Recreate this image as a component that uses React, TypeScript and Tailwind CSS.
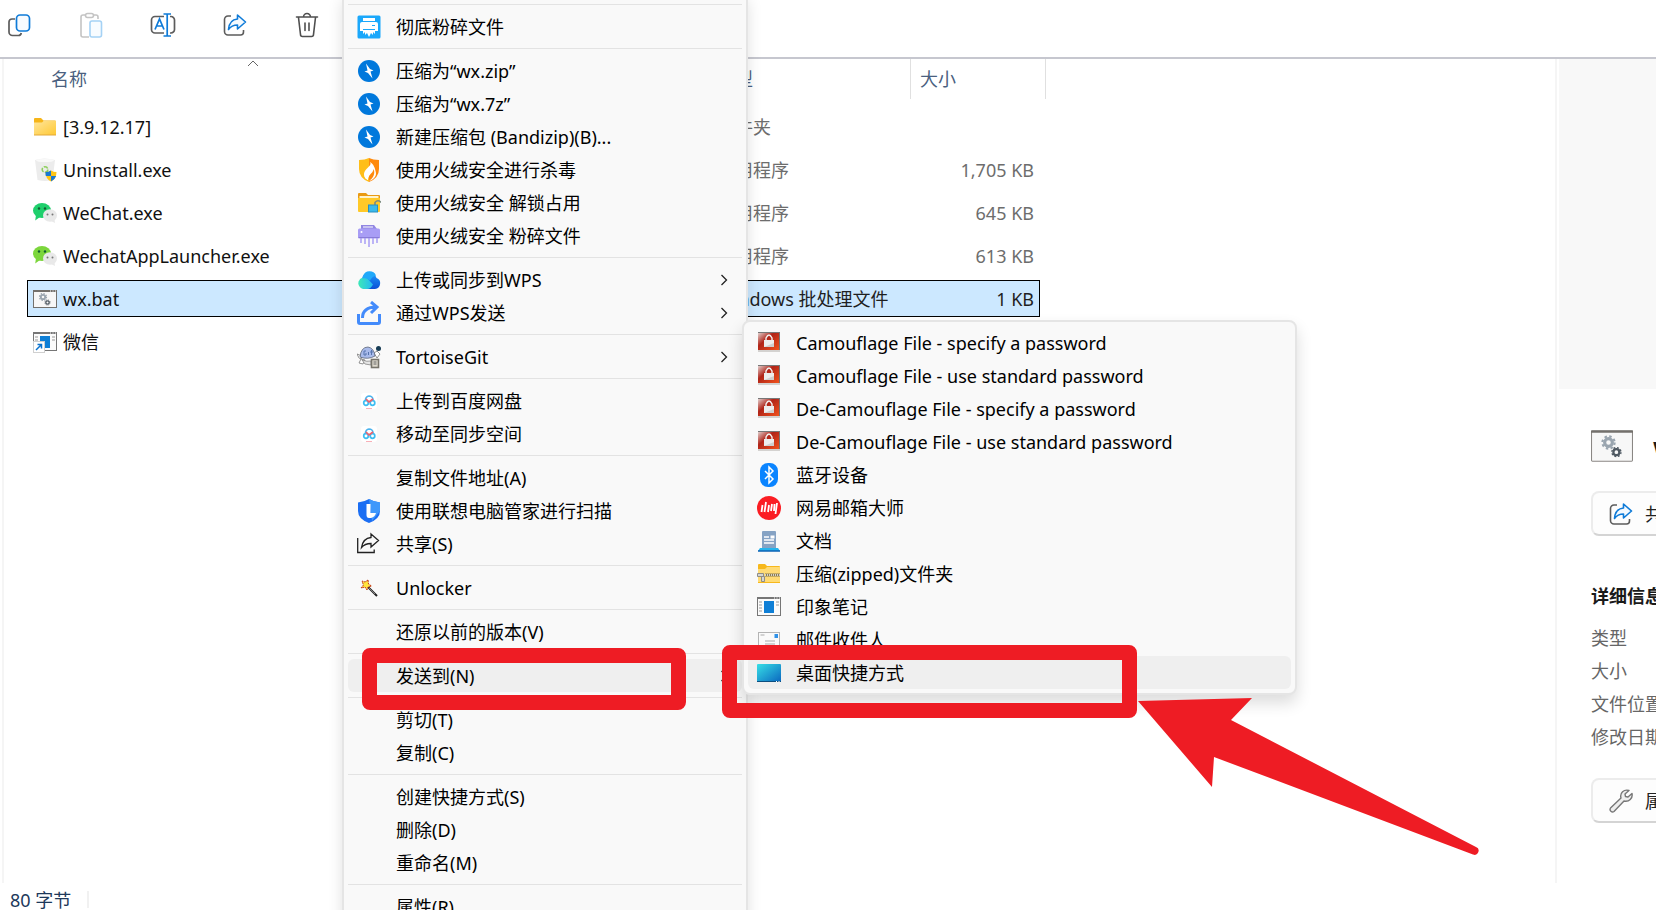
import type { ReactNode } from "react"
import { useState } from "react"

const font = "font-['Noto_Sans','Noto_Sans_CJK_SC',sans-serif]"


// ---------- toolbar icons ----------

function CopyIcon() {
  return (
    <svg width="24" height="24" viewBox="0 0 24 24" fill="none" strokeWidth="1.7">
      <path d="M8 6H5a3 3 0 0 0-3 3v10a3.500 3.500 0 0 0 3.500 3.500h6A3 3 0 0 0 14.300 20" stroke="#5c5c5c" />
      <rect x="9.500" y="2" width="13" height="16" rx="3.500" fill="#f7fbff" stroke="#0f7bd8" />
    </svg>
  )
}

function PasteIcon() {
  return (
    <svg width="24" height="26" viewBox="0 0 24 26" fill="none" strokeWidth="1.6">
      <path d="M10 25H4a2 2 0 0 1-2-2V5a2 2 0 0 1 2-2h3M14 3h3a2 2 0 0 1 2 2v2" stroke="#c4c4c4" />
      <rect x="6.500" y="1.500" width="8" height="4" rx="2" stroke="#c4c4c4" />
      <rect x="11" y="9" width="11.500" height="16" rx="2" fill="#f8fcff" stroke="#a5d2f5" />
    </svg>
  )
}

function RenameIcon() {
  return (
    <svg width="26" height="26" viewBox="0 0 26 26" fill="none" strokeWidth="1.7">
      <path d="M14 4.500H5a3.500 3.500 0 0 0-3.500 3.500v9.500A3.500 3.500 0 0 0 5 21h9M20 4.500h1a3.500 3.500 0 0 1 3.500 3.500v9.500A3.500 3.500 0 0 1 21 21h-1" stroke="#5c5c5c" />
      <path d="M5 17.500L9.500 7l4.500 10.500M6.500 14h6M13.500 2h7.500M13.500 24h7.500M17.200 2v22" stroke="#0f7bd8" />
    </svg>
  )
}

function ShareIcon() {
  return (
    <svg width="24" height="24" viewBox="0 0 24 24" fill="none" strokeWidth="1.6" strokeLinejoin="round">
      <path d="M8 3H5a3.500 3.500 0 0 0-3.500 3.500v12A3.500 3.500 0 0 0 5 22h12.500a3 3 0 0 0 3-3v-2" stroke="#5c5c5c" />
      <path d="M14.500 2l8 7-8 7v-4c-4 0-6.500 1-9 4.500C6 10 9 6.500 14.500 6z" fill="#f4faff" stroke="#0f7bd8" />
    </svg>
  )
}

function TrashIcon() {
  return (
    <svg width="24" height="26" viewBox="0 0 24 26" fill="none" stroke="#4f4f4f" strokeWidth="1.6" strokeLinecap="round">
      <path d="M1.500 5h21M8.500 5a3.500 3.500 0 0 1 7 0M3.500 5.500l2 17a2 2 0 0 0 2 2h9a2 2 0 0 0 2-2l2-17M10 11v7.500M14 11v7.500" />
    </svg>
  )
}


// ---------- file icons ----------

function Gears() {
  return (
    <>
      <circle cx="10" cy="7" r="2.200" fill="none" stroke="#9aa5af" strokeWidth="1.800" />
      <circle cx="10" cy="7" r="3.500" fill="none" stroke="#9aa5af" strokeWidth="1.200" strokeDasharray="1.400 1.350" />
      <circle cx="14.500" cy="12.500" r="1.700" fill="none" stroke="#4f5962" strokeWidth="1.300" />
      <circle cx="14.500" cy="12.500" r="2.600" fill="none" stroke="#4f5962" strokeWidth=".8" strokeDasharray="1.050 1" />
    </>
  )
}

function BatIcon() {
  return (
    <svg width="24" height="18" viewBox="0 0 24 18">
      <rect x=".5" y=".5" width="23" height="17" fill="#f7f7f7" stroke="#73706c" />
      <path d="M0 1h24" stroke="#73706c" strokeWidth="2" />
      <path d="M17 1h1M19.500 1h1M22 1h1" stroke="#fff" />
      <Gears />
    </svg>
  )
}

function FolderIcon() {
  return (
    <svg width="24" height="18" viewBox="0 0 24 18">
      <defs>
        <linearGradient id="folder" x1="0" y1="0" x2="1" y2="1">
          <stop stopColor="#ffe59b" />
          <stop offset="1" stopColor="#ffc933" />
        </linearGradient>
      </defs>
      <path d="M1 1q0-1 1-1h6l2.500 2.500H22q1 0 1 1V16H1z" fill="#f6b519" />
      <path d="M1 4.500h8L10.500 3H23v14H1z" fill="url(#folder)" />
      <path d="M1 17h22" stroke="#e2a93a" />
    </svg>
  )
}

function UninstallIcon() {
  return (
    <svg width="24" height="24" viewBox="0 0 24 24">
      <path d="M2 2q9-3 20 0l-2.500 20q-7 2-15 0z" fill="#ececec" />
      <ellipse cx="12" cy="2.500" rx="9" ry="1.600" fill="#f9f9f9" />
      <circle cx="12" cy="11.500" r="2.800" fill="none" stroke="#8ccf5a" strokeWidth="1.600" strokeDasharray="4.500 1.300" />
      <path d="M18 12.500q2.500 1.500 5.500 1.500 0 7-5.500 9.500-5.500-2.500-5.500-9.500 3 0 5.500-1.500z" fill="#ffc515" />
      <path d="M18 12.500V18h-5.200q-.4-2-.3-4 3 0 5.500-1.500zM18 18h5.200q-1.200 3.500-5.200 5.500z" fill="#1a78d2" />
    </svg>
  )
}

function WeChatIcon({ color }: { color: string }) {
  return (
    <svg width="24" height="20" viewBox="0 0 24 20">
      <ellipse cx="9" cy="7.500" rx="9" ry="7.500" fill={color} />
      <path d="M3 12l-.8 5.500L7 14z" fill={color} />
      <circle cx="6" cy="5.500" r="1.200" fill="#125c32" />
      <circle cx="12" cy="5.500" r="1.200" fill="#125c32" />
      <ellipse cx="17" cy="12.500" rx="7" ry="6.200" fill="#e9e9e9" />
      <path d="M18 18l4 2-.5-4z" fill="#e9e9e9" />
      <circle cx="14.500" cy="11.500" r="1" fill="#777" />
      <circle cx="19.500" cy="11.500" r="1" fill="#777" />
    </svg>
  )
}

function AppWindow({ shortcut }: { shortcut?: boolean }) {
  return (
    <svg width="24" height="20" viewBox="0 0 24 20" overflow="visible">
      <rect x=".5" y=".5" width="23" height="18" fill="#fbfbfb" stroke="#767676" />
      <path d="M0 1h24" stroke="#767676" strokeWidth="2" />
      <path d="M17 1h1M19.500 1h1M22 1h1" stroke="#fff" />
      <path d="M2 5h3M2 8h3M2 11h3M2 14h3M19 5h3M19 8h3" stroke="#999" />
      <rect x="7" y="4" width="10" height="12" fill="#0f7fd6" />
      {shortcut && (
        <>
          <rect x=".5" y="9.500" width="11" height="11" fill="#fff" stroke="#d0d0d0" />
          <path d="M3 18l5.500-5.500M4.500 12.500h4v4" fill="none" stroke="#0b73ce" strokeWidth="1.500" />
        </>
      )}
    </svg>
  )
}


// ---------- context menu icons ----------

function ShredIcon() {
  return (
    <svg width="24" height="24" viewBox="0 0 24 24">
      <rect x=".5" y=".5" width="23" height="23" rx="1.500" fill="#1ba8fb" />
      <path d="M6 3h12v3H6zM5 7h14q2 0 2 2v7h-3v-2H6v2H3V9q0-2 2-2z" fill="#fff" />
      <path d="M6 15h12v4l-2-2v3l-2-2-2 4-2-4-2 2v-3l-2 2z" fill="#fff" />
      <path d="M15 10.500h3" stroke="#1ba8fb" />
    </svg>
  )
}

function BandizipIcon() {
  return (
    <svg width="24" height="24" viewBox="0 0 24 24">
      <circle cx="12" cy="12" r="11" fill="#0078dc" />
      <path d="M9 4.500l4 5.500 3.500 1.500-3 1 2 7L11 14l-3.500-1.500 3-1z" fill="#fff" />
    </svg>
  )
}

function HuorongIcon() {
  return (
    <svg width="24" height="24" viewBox="0 0 24 24">
      <path d="M2 2q6 0 10-2v24Q2 20 2 11z" fill="#ffbe18" />
      <path d="M12 0q4 2 10 2v9q0 9-10 13z" fill="#ff8a0d" />
      <path d="M13 4c3 4-7 7-6 13 .4 2 2 4 4 5-1-5 5-6 5.500-11 2 4 0 9-4.500 12 6-2 8-6 6.500-10C17.500 9 17 7 13 4z" fill="#fff" />
      <path d="M7.500 18c2-5 7-5 6.500-10 3 5-3 8-3 14-2-1-3.500-2-3.500-4z" fill="#fff" />
    </svg>
  )
}

function UnlockFolderIcon() {
  return (
    <svg width="24" height="24" viewBox="0 0 24 24">
      <path d="M1 3q0-1 1-1h7l2 2h11q1 0 1 1v14H1z" fill="#e99a13" />
      <path d="M2.500 5h19v3h-19z" fill="#fff4cc" />
      <path d="M1 7h22v13q0 1-1 1H2q-1 0-1-1z" fill="#ffc928" />
      <path d="M18 14v-2.500q3-3.500 6 0" fill="none" stroke="#7c8c80" strokeWidth="1.600" />
      <rect x="11.500" y="14" width="9" height="7" fill="#3bb9ea" stroke="#288fc0" />
    </svg>
  )
}

function PurpleShredIcon() {
  return (
    <svg width="24" height="24" viewBox="0 0 24 24">
      <path d="M4 1h13l3 4H4z" fill="#9186e2" />
      <path d="M6 3h10" stroke="#fff" />
      <rect x="1" y="4.500" width="22" height="10" rx="1.500" fill="#a89df5" />
      <path d="M1.500 13.500h21" stroke="#887cd8" />
      <circle cx="4.500" cy="8" r="1" fill="#fff" />
      <path d="M4 14v5M8 14v6M12 14v9M16 14v6M20 14v5" stroke="#a89df5" strokeWidth="1.500" />
    </svg>
  )
}

function WpsCloudIcon() {
  return (
    <svg width="24" height="24" viewBox="0 0 24 24">
      <defs>
        <linearGradient id="cloudLeft" x1="0" x2="1">
          <stop stopColor="#3ce8b8" />
          <stop offset="1" stopColor="#24b7f4" />
        </linearGradient>
        <linearGradient id="cloudRight" x1="0" y1="0" x2="0" y2="1">
          <stop stopColor="#1e99fb" />
          <stop offset="1" stopColor="#0a50d6" />
        </linearGradient>
      </defs>
      <path d="M5 11a7.500 7.500 0 0 1 14.500-1A5.700 5.700 0 0 1 18 21H7z" fill="url(#cloudRight)" />
      <path d="M10 21H6A5.900 5.900 0 1 1 10 10l6 6.500Q13.500 21 10 21z" fill="url(#cloudLeft)" />
      <path d="M6 8a7 7 0 0 1 13-.5q-4 1-6 5-4-3-7.500-2z" fill="#20a9fa" />
    </svg>
  )
}

function WpsSendIcon() {
  return (
    <svg width="24" height="24" viewBox="0 0 24 24" fill="none" stroke="#438bfb" strokeWidth="3">
      <path d="M1.500 13v8q0 1.500 1.500 1.500h18q1.500 0 1.500-1.500v-8M5.500 17q0-11 14-11M14 1l6 5-6 6" />
    </svg>
  )
}

function TortoiseIcon() {
  return (
    <svg width="24" height="24" viewBox="0 0 24 24">
      <path d="M0 9l5 2-1 3-2-1zM4 14l-2 4 4 1 2-4zM17 8l3-2 3 3-3 4z" fill="#fff" stroke="#777" strokeWidth=".8" />
      <circle cx="21.500" cy="3.500" r="2.500" fill="#173c55" />
      <path d="M3 12Q4 2 11 2q6 1 7 9-7 4-15 1z" fill="#a8baea" stroke="#5b6478" strokeWidth=".8" />
      <path d="M9 6H7v4h2V8M11.500 7v3M14.500 5v5M13 7h3" fill="none" stroke="#5674ae" />
      <path d="M5 15q5 2 9 1v4l-6-1z" fill="#e6e6e6" stroke="#777" strokeWidth=".7" />
      <rect x="14.500" y="14.500" width="7" height="8" fill="#ddd9cd" stroke="#77746b" strokeWidth="1.600" />
      <path d="M16.500 17h3M16.500 19h3" stroke="#666" />
    </svg>
  )
}

function BaiduIcon() {
  return (
    <svg width="24" height="24" viewBox="0 0 24 24" fill="none" strokeWidth="1.700">
      <rect x="4" y="4" width="16" height="16" rx="3" fill="#fff" />
      <path d="M8.500 11.500A4 4 0 0 1 12 7a4 4 0 0 1 4 4" stroke="#4db4ee" />
      <circle cx="9" cy="14" r="2.300" stroke="#3dbdf2" />
      <circle cx="15.500" cy="14" r="2.300" stroke="#3dbdf2" />
      <path d="M9 10l3 3 4-3" stroke="#f0606c" />
      <path d="M9 19.500h6" stroke="#f8b0b8" strokeWidth="1" />
    </svg>
  )
}

function LenovoIcon() {
  return (
    <svg width="24" height="24" viewBox="0 0 24 24">
      <path d="M1 3.500Q7 3 12 0q5 3 11 3.500V12q0 8-11 12Q1 20 1 12z" fill="#1b6ef3" />
      <path d="M12 0q5 3 11 3.500V12l-8 10z" fill="#3f98fb" />
      <path d="M9.500 5h4v9H19q-1 4-5 5h-2q-2.500 0-2.500-3z" fill="#fff" />
    </svg>
  )
}

function DarkShareIcon() {
  return (
    <svg width="24" height="24" viewBox="0 0 24 24" fill="none" stroke="#222" strokeWidth="1.300">
      <path d="M.7 6v14.500h16.500v-3M14 2l7.500 6.500L14 15v-3.500c-4 0-7 1-9.500 4C5.500 9.500 8.500 6 14 5.500z" />
    </svg>
  )
}

function WandIcon() {
  return (
    <svg width="24" height="24" viewBox="0 0 24 24">
      <path d="M11 11l9 9" stroke="#222" strokeWidth="2" />
      <path d="M12 12l6 6" stroke="#aaa" strokeWidth=".7" />
      <path d="M11 4l.5 4 3 2-3.500 1-1 3-2-3-4 1 2.500-3L5 5l3 1z" fill="#ffe43c" stroke="#c53a18" strokeWidth="1" strokeDasharray="2 .7" />
    </svg>
  )
}


// ---------- send to icons ----------

function CamouflageIcon() {
  return (
    <svg width="24" height="24" viewBox="0 0 24 24">
      <defs>
        <linearGradient id="camo" x1="0" y1="0" x2="1" y2="1">
          <stop stopColor="#e4dcdc" />
          <stop offset=".4" stopColor="#b02418" />
          <stop offset="1" stopColor="#f2521c" />
        </linearGradient>
      </defs>
      <rect x="1" y="1" width="22" height="20" fill="#d4d2d0" />
      <rect x="1" y="1" width="21" height="18" fill="url(#camo)" />
      <path d="M22.500 1v18M1 1.500h22" stroke="#777" />
      <path d="M9 11V7q3-6 6 0v4" fill="none" stroke="#f3f3f3" strokeWidth="1.400" />
      <rect x="7" y="9" width="10" height="7" fill="#ededed" />
      <path d="M7 16l10-4v4z" fill="#cfcfcf" />
    </svg>
  )
}

function BluetoothIcon() {
  return (
    <svg width="24" height="24" viewBox="0 0 24 24">
      <rect x="3" y="0" width="18" height="24" rx="8" fill="#0a84ff" />
      <path d="M8 8l8 8-4 4V4l4 4-8 8" fill="none" stroke="#fff" strokeWidth="1.500" />
    </svg>
  )
}

function MailMasterIcon() {
  return (
    <svg width="24" height="24" viewBox="0 0 24 24">
      <circle cx="12" cy="12" r="12" fill="#fb1d23" />
      <path d="M5.500 9l-1 7M9 6L7.500 16M12 9l-1 7M15 8l-1 7M17.500 8l-.5 7M20 7l-1.500 11" fill="none" stroke="#fff" strokeWidth="1.800" />
    </svg>
  )
}

function DocsIcon() {
  return (
    <svg width="24" height="24" viewBox="0 0 24 24">
      <rect x="5" y="2" width="14" height="18" rx="1" fill="#86a3c4" />
      <path d="M7 8h5M7 11h10M7 14h10" stroke="#fff" strokeWidth="1.300" />
      <rect x="13.500" y="6.500" width="4" height="3" fill="#fff" />
      <path d="M3 19h18l2 3H1z" fill="#26b4ee" />
      <path d="M1 22h22" stroke="#0b62b4" strokeWidth="1.500" />
    </svg>
  )
}

function ZipFolderIcon() {
  return (
    <svg width="24" height="24" viewBox="0 0 24 24">
      <path d="M1 3q0-1 1-1h6l2 2h12q1 0 1 1v16H1z" fill="#f7b81c" />
      <path d="M1 7h7l2-2h13v15H1z" fill="#ffdb75" />
      <path d="M8 13h15" stroke="#8b7d55" strokeWidth="3" />
      <path d="M8 13h15" stroke="#eee" strokeWidth="1.500" strokeDasharray="1 1" />
      <path d="M.5 11.500h6v3h-6zM4.500 14.500h3v5h-3z" fill="#d6d6d2" stroke="#8f8d86" />
    </svg>
  )
}

function MailIcon() {
  return (
    <svg width="24" height="24" viewBox="0 0 24 24">
      <rect x="1.500" y="4.500" width="21" height="16" fill="#fafafa" stroke="#b4b4b4" />
      <rect x="17.500" y="6" width="3.500" height="4" fill="#2f91e8" />
      <path d="M3.500 7h4M8 13h10M8 16h10" stroke="#aaa" />
    </svg>
  )
}

function DesktopIcon() {
  return (
    <svg width="24" height="24" viewBox="0 0 24 24">
      <defs>
        <linearGradient id="desk" x1="0" y1="0" x2="1" y2="1">
          <stop stopColor="#37dfe6" />
          <stop offset="1" stopColor="#0a66bf" />
        </linearGradient>
      </defs>
      <rect x="0" y="3" width="24" height="18" rx="1" fill="url(#desk)" />
      <path d="M0 20.500h24" stroke="#0d4f80" />
      <path d="M19 20.500h1M21.500 20.500h1" stroke="#fff" />
    </svg>
  )
}

function Chevron() {
  return (
    <svg width="8" height="12" viewBox="0 0 8 12" fill="none" stroke="#222" strokeWidth="1.300">
      <path d="M1.500 1l5 5-5 5" />
    </svg>
  )
}


// ---------- data ----------

type Entry = { label: string; icon?: ReactNode; more?: boolean }

// every inner list is one group, groups are divided by a line
const menuGroups: Entry[][] = [
  [{ label: "彻底粉碎文件", icon: <ShredIcon /> }],
  [
    { label: "压缩为“wx.zip”", icon: <BandizipIcon /> },
    { label: "压缩为“wx.7z”", icon: <BandizipIcon /> },
    { label: "新建压缩包 (Bandizip)(B)...", icon: <BandizipIcon /> },
    { label: "使用火绒安全进行杀毒", icon: <HuorongIcon /> },
    { label: "使用火绒安全 解锁占用", icon: <UnlockFolderIcon /> },
    { label: "使用火绒安全 粉碎文件", icon: <PurpleShredIcon /> },
  ],
  [
    { label: "上传或同步到WPS", icon: <WpsCloudIcon />, more: true },
    { label: "通过WPS发送", icon: <WpsSendIcon />, more: true },
  ],
  [{ label: "TortoiseGit", icon: <TortoiseIcon />, more: true }],
  [
    { label: "上传到百度网盘", icon: <BaiduIcon /> },
    { label: "移动至同步空间", icon: <BaiduIcon /> },
  ],
  [
    { label: "复制文件地址(A)" },
    { label: "使用联想电脑管家进行扫描", icon: <LenovoIcon /> },
    { label: "共享(S)", icon: <DarkShareIcon /> },
  ],
  [{ label: "Unlocker", icon: <WandIcon /> }],
  [{ label: "还原以前的版本(V)" }],
  [{ label: "发送到(N)", more: true }],
  [{ label: "剪切(T)" }, { label: "复制(C)" }],
  [{ label: "创建快捷方式(S)" }, { label: "删除(D)" }, { label: "重命名(M)" }],
  [{ label: "属性(R)" }],
]

const sendTo: Entry[] = [
  { label: "Camouflage File - specify a password", icon: <CamouflageIcon /> },
  { label: "Camouflage File - use standard password", icon: <CamouflageIcon /> },
  { label: "De-Camouflage File - specify a password", icon: <CamouflageIcon /> },
  { label: "De-Camouflage File - use standard password", icon: <CamouflageIcon /> },
  { label: "蓝牙设备", icon: <BluetoothIcon /> },
  { label: "网易邮箱大师", icon: <MailMasterIcon /> },
  { label: "文档", icon: <DocsIcon /> },
  { label: "压缩(zipped)文件夹", icon: <ZipFolderIcon /> },
  { label: "印象笔记", icon: <AppWindow /> },
  { label: "邮件收件人", icon: <MailIcon /> },
  { label: "桌面快捷方式", icon: <DesktopIcon /> },
]

const files = [
  { name: "[3.9.12.17]", type: "文件夹", size: "", icon: <FolderIcon /> },
  { name: "Uninstall.exe", type: "应用程序", size: "1,705 KB", icon: <UninstallIcon /> },
  { name: "WeChat.exe", type: "应用程序", size: "645 KB", icon: <WeChatIcon color="#1fcf6c" /> },
  { name: "WechatAppLauncher.exe", type: "应用程序", size: "613 KB", icon: <WeChatIcon color="#7cd63c" /> },
  { name: "wx.bat", type: "Windows 批处理文件", size: "1 KB", icon: <BatIcon /> },
  { name: "微信", type: "", size: "", icon: <AppWindow shortcut /> },
]

const tools = [
  { label: "复制", icon: <CopyIcon /> },
  { label: "粘贴", icon: <PasteIcon /> },
  { label: "重命名", icon: <RenameIcon /> },
  { label: "共享", icon: <ShareIcon /> },
  { label: "删除", icon: <TrashIcon /> },
]


function MenuItem({ entry, active }: { entry: Entry; active?: boolean }) {
  return (
    <button
      role="menuitem"
      className={`flex h-[33px] w-full items-center rounded-md pl-[9px] pr-[14px] text-left text-black hover:bg-[#efefef] ${active ? "bg-[#efefef]" : ""}`}
    >
      <span className="mr-[15px] flex w-6 shrink-0 justify-center">{entry.icon}</span>
      <span className="flex-1 whitespace-nowrap">{entry.label}</span>
      {entry.more && <Chevron />}
    </button>
  )
}

function FileTable() {
  const [selected, setSelected] = useState("wx.bat")

  return (
    <table className="ml-[23px] w-[1019px] shrink-0 table-fixed border-collapse self-start text-left">
      <colgroup>
        <col className="w-[452px]" />
        <col className="w-[228px]" />
        <col className="w-[204px]" />
        <col className="w-[135px]" />
      </colgroup>
      <thead>
        <tr className="h-[46px] align-top text-[#4a5f80]">
          <th className="relative p-0 font-normal">
            <div className="flex h-10 items-center pl-6">名称</div>
            <svg className="absolute left-1/2 top-0 -ml-[6px]" width="12" height="8" viewBox="0 0 12 8" fill="none" stroke="#666">
              <path d="M1 7l5-5 5 5" />
            </svg>
          </th>
          <th className="p-0"></th>
          <th className="p-0 font-normal">
            <div className="flex h-10 items-center border-r border-[#e0e0e0] pl-[10px]">类型</div>
          </th>
          <th className="p-0 font-normal">
            <div className="flex h-10 items-center border-r border-[#e0e0e0] pl-[9px]">大小</div>
          </th>
        </tr>
      </thead>
      <tbody>
        {files.map(file => {
          const on = file.name === selected
          const edge = on ? "border-black bg-[#cce8ff]" : "border-transparent"
          const muted = on ? "text-[#1f1f1f]" : "text-[#6d6d6d]"
          return (
            <tr key={file.name} className="h-[43px]" onClick={() => setSelected(file.name)}>
              <td className="p-0">
                <div className={`flex h-[37px] items-center gap-[6px] border-y border-l pl-[5px] text-[#111] ${edge}`}>
                  <span className="flex w-6 justify-center">{file.icon}</span>
                  {file.name}
                </div>
              </td>
              <td className="p-0"><div className={`h-[37px] border-y ${edge}`}></div></td>
              <td className="p-0">
                <div className={`flex h-[37px] items-center whitespace-nowrap border-y pl-[10px] ${edge} ${muted}`}>{file.type}</div>
              </td>
              <td className="p-0">
                <div className={`mr-[6px] flex h-[37px] items-center justify-end border-y border-r pr-[5px] ${edge} ${muted}`}>{file.size}</div>
              </td>
            </tr>
          )
        })}
      </tbody>
    </table>
  )
}

function Details() {
  return (
    <aside className="ml-auto w-[101px] shrink-0 overflow-hidden border-l-2 border-[#f5f5f5]">
      <div className="ml-[2px] h-[330px] bg-[#f8f8f8]"></div>

      <div className="ml-[34px] w-[280px]">
        <div className="mt-10 flex h-[34px] items-center gap-5">
          <svg width="42" height="32" viewBox="0 0 24 18">
            <rect x=".3" y=".3" width="23.400" height="17.400" rx=".5" fill="#f7f7f7" stroke="#8a8784" strokeWidth=".6" />
            <path d="M0 .8h24" stroke="#73706c" strokeWidth="1.300" />
            <Gears />
          </svg>
          <h2 className="text-xl font-bold text-[#1a1a1a]">wx.bat</h2>
        </div>

        <button className="mt-7 flex h-[45px] w-full items-center gap-3 rounded-lg border-2 border-[#ececec] border-b-[#d4d4d4] bg-[#fdfdfd] pl-4 text-[#222]">
          <ShareIcon />共享
        </button>

        <h3 className="mt-11 h-[33px] font-bold leading-[33px] text-[#1a1a1a]">详细信息</h3>
        <dl className="mt-[9px] leading-[33px] text-[#666]">
          <dt>类型</dt>
          <dt>大小</dt>
          <dt>文件位置</dt>
          <dt>修改日期</dt>
        </dl>

        <button className="mt-6 flex h-[45px] w-full items-center gap-3 rounded-lg border-2 border-[#ececec] border-b-[#d4d4d4] bg-[#fdfdfd] pl-4 text-[#222]">
          <svg width="24" height="24" viewBox="0 0 24 24" fill="#eee" stroke="#777" strokeWidth="1.400" strokeLinejoin="round">
            <path d="M20 1.500L16 5l.5 2.500L19 8l4-3.500c1 5-3 8.500-8 7.500L5 22.500c-2 1.500-5-1-3.500-3.500L12 9c-1.500-5 3-9 8-7.500z" />
          </svg>
          属性
        </button>
      </div>
    </aside>
  )
}

export default function App() {
  return (
    <div className={`relative flex h-screen flex-col overflow-hidden bg-white text-[18px] leading-6 ${font}`}>

      <header className="flex h-[59px] shrink-0 gap-9 border-b-2 border-[#c6c7cf] pl-[1px]">
        {tools.map(tool => (
          <button key={tool.label} aria-label={tool.label} className="flex h-[50px] w-9 items-center justify-center">
            {tool.icon}
          </button>
        ))}
      </header>

      <main className="ml-[2px] flex min-h-0 flex-1 border-l-2 border-[#f5f5f5]">
        <FileTable />
        <Details />
      </main>

      <footer className="flex h-[27px] shrink-0 items-center pl-[10px] pt-[6px] text-[#1e395b]">
        <span>80 字节</span>
        <span className="ml-4 h-[17px] border-l-2 border-[#f1f1f1]"></span>
      </footer>

      {/* context menu, runs past the top and the bottom of the window */}
      <div role="menu" className="absolute -bottom-4 left-[342px] top-0 w-[406px] overflow-hidden border-x-2 border-[#e5e5e5] bg-[#f9f9f9] px-1 shadow-[0_0_14px_rgba(0,0,0,0.12)]">
        {menuGroups.map((group, i) => (
          <div key={i} className={`border-t border-[#e3e3e3] pt-[5px] ${i === 0 ? "mt-1" : "mt-[5px]"}`}>
            {group.map(entry => (
              <MenuItem key={entry.label} entry={entry} active={entry.label === "发送到(N)"} />
            ))}
          </div>
        ))}
      </div>

      {/* send to submenu */}
      <div role="menu" className="absolute left-[742px] top-[320px] w-[555px] rounded-lg border-2 border-[#e5e5e5] bg-[#f9f9f9] p-1 shadow-[0_8px_16px_rgba(0,0,0,0.14)]">
        {sendTo.map(entry => (
          <MenuItem key={entry.label} entry={entry} active={entry.label === "桌面快捷方式"} />
        ))}
      </div>

      {/* red marks over the two menu entries */}
      <div className="pointer-events-none absolute left-[362px] top-[648px] h-[62px] w-[324px] rounded-lg border-[15px] border-[#ee1c24]"></div>
      <div className="pointer-events-none absolute left-[722px] top-[645px] h-[73px] w-[415px] rounded-lg border-[15px] border-[#ee1c24]"></div>
      <svg className="pointer-events-none absolute left-[1138px] top-[698px]" width="342" height="158" viewBox="0 0 342 158" fill="#ee1c24">
        <path d="M0 3L114 0 93 22 338 149a4 4 0 0 1-3 7.500L76 59 74 89z" />
      </svg>
    </div>
  )
}
